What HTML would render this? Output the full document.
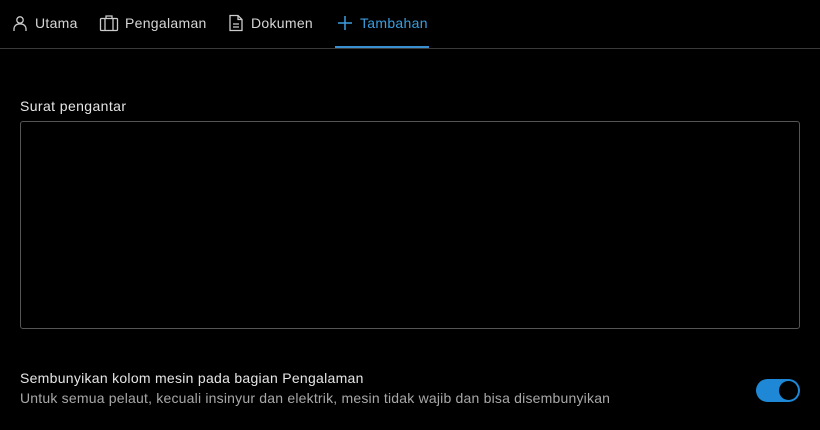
<!DOCTYPE html>
<html><head><style>
body{margin:0;background:#000;width:820px;height:430px;overflow:hidden;font-family:"Liberation Sans",sans-serif;color:#ddd;position:relative;letter-spacing:0.3px}
.tab{position:absolute;top:14px;font-size:14px;color:#d6d6d6;display:flex;align-items:center;gap:6px;height:18px}
svg{display:block}
</style></head><body>
<div class="tab" style="left:11px"><svg width="18" height="18" viewBox="0 0 18 18" fill="none" stroke="#ccc" stroke-width="1.3"><circle cx="9" cy="6" r="3.2"/><path d="M3 17v-2a5 5 0 0 1 5-5h2a5 5 0 0 1 5 5v2"/></svg>Utama</div>
<div class="tab" style="left:99px"><svg width="20" height="18" viewBox="0 0 20 18" fill="none" stroke="#ccc" stroke-width="1.3"><rect x="1.5" y="4.5" width="17" height="12" rx="1"/><path d="M7 4.5V2h6v2.5M6 4.5v12M14 4.5v12"/></svg>Pengalaman</div>
<div class="tab" style="left:227px"><svg width="18" height="18" viewBox="0 0 18 18" fill="none" stroke="#ccc" stroke-width="1.3"><path d="M3 1.5h8l4 4v11H3z M11 1.5v4h4 M6 10h6 M6 13h6"/></svg>Dokumen</div>
<div class="tab" style="left:336px;color:#3a9ee0"><svg width="18" height="18" viewBox="0 0 18 18" fill="none" stroke="#3a9ee0" stroke-width="1.5"><path d="M9 2v14M2 9h14"/></svg>Tambahan</div>
<div style="position:absolute;left:335px;top:46px;width:94px;height:2px;background:#3a8fd0"></div>
<div style="position:absolute;left:0;top:48px;width:820px;height:1px;background:#3a3a3a"></div>
<div style="position:absolute;left:20px;top:98px;font-size:14px;color:#e6e6e6;letter-spacing:0.4px">Surat pengantar</div>
<div style="position:absolute;left:20px;top:121px;width:778px;height:206px;border:1px solid #555;border-radius:3px"></div>
<div style="position:absolute;left:20px;top:370px;font-size:14px;color:#e6e6e6;letter-spacing:0.28px">Sembunyikan kolom mesin pada bagian Pengalaman</div>
<div style="position:absolute;left:20px;top:390px;font-size:14px;color:#a8a8a8;letter-spacing:0.2px">Untuk semua pelaut, kecuali insinyur dan elektrik, mesin tidak wajib dan bisa disembunyikan</div>
<div style="position:absolute;left:756px;top:379px;width:44px;height:23px;border-radius:12px;background:#1e88d6"></div>
<div style="position:absolute;left:779px;top:381px;width:19px;height:19px;border-radius:50%;background:#000"></div>
</body></html>
